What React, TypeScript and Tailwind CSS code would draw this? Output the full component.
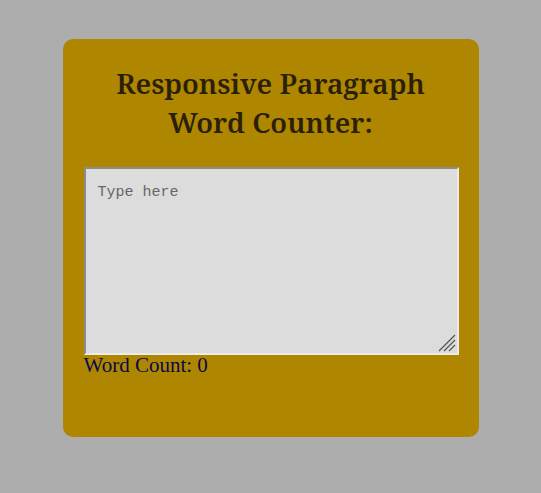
import React, { useState } from "react";

export default function App() {
  const [text, setText] = useState("");
  const count = text.trim() === "" ? 0 : text.trim().split(/\s+/).length;
  return (
    <div className="min-h-[493px] w-full bg-[#adadad] flex justify-center pt-[39px]">
      <div className="w-[416px] h-[398px] bg-[#ae8600] rounded-[10px] px-[21px] pt-[25px] flex flex-col">
        <h1 className="text-center font-['Noto_Serif',serif] text-[28px] leading-[39px] font-semibold text-[#2a1f0a]">
          Responsive Paragraph
          <br />
          Word Counter:
        </h1>
        <div className="relative mt-[25px] w-[375px] h-[188px]">
          <textarea
            value={text}
            onChange={(e) => setText(e.target.value)}
            placeholder="Type here"
            className="block w-full h-full bg-[#dcdcdc] border-2 border-t-[#8c8c8c] border-l-[#8c8c8c] border-r-[#ececec] border-b-[#ececec] px-[12px] pt-[15px] pb-[14px] font-['Liberation_Mono',monospace] text-[15px] leading-[18px] text-[#333] placeholder:text-[#666] outline-none resize-none"
          />
          <svg
            className="absolute right-[3px] bottom-[3px] pointer-events-none"
            width="18"
            height="18"
            viewBox="0 0 18 18"
          >
            <line x1="17" y1="1" x2="1" y2="17" stroke="#555" strokeWidth="1.3" />
            <line x1="17" y1="6" x2="6" y2="17" stroke="#555" strokeWidth="1.3" />
            <line x1="17" y1="11" x2="11" y2="17" stroke="#555" strokeWidth="1.3" />
          </svg>
        </div>
        <div className="font-['Liberation_Serif',serif] text-[21px] leading-[20px] text-[#0b0a4a]">
          Word Count: {count}
        </div>
      </div>
    </div>
  );
}
